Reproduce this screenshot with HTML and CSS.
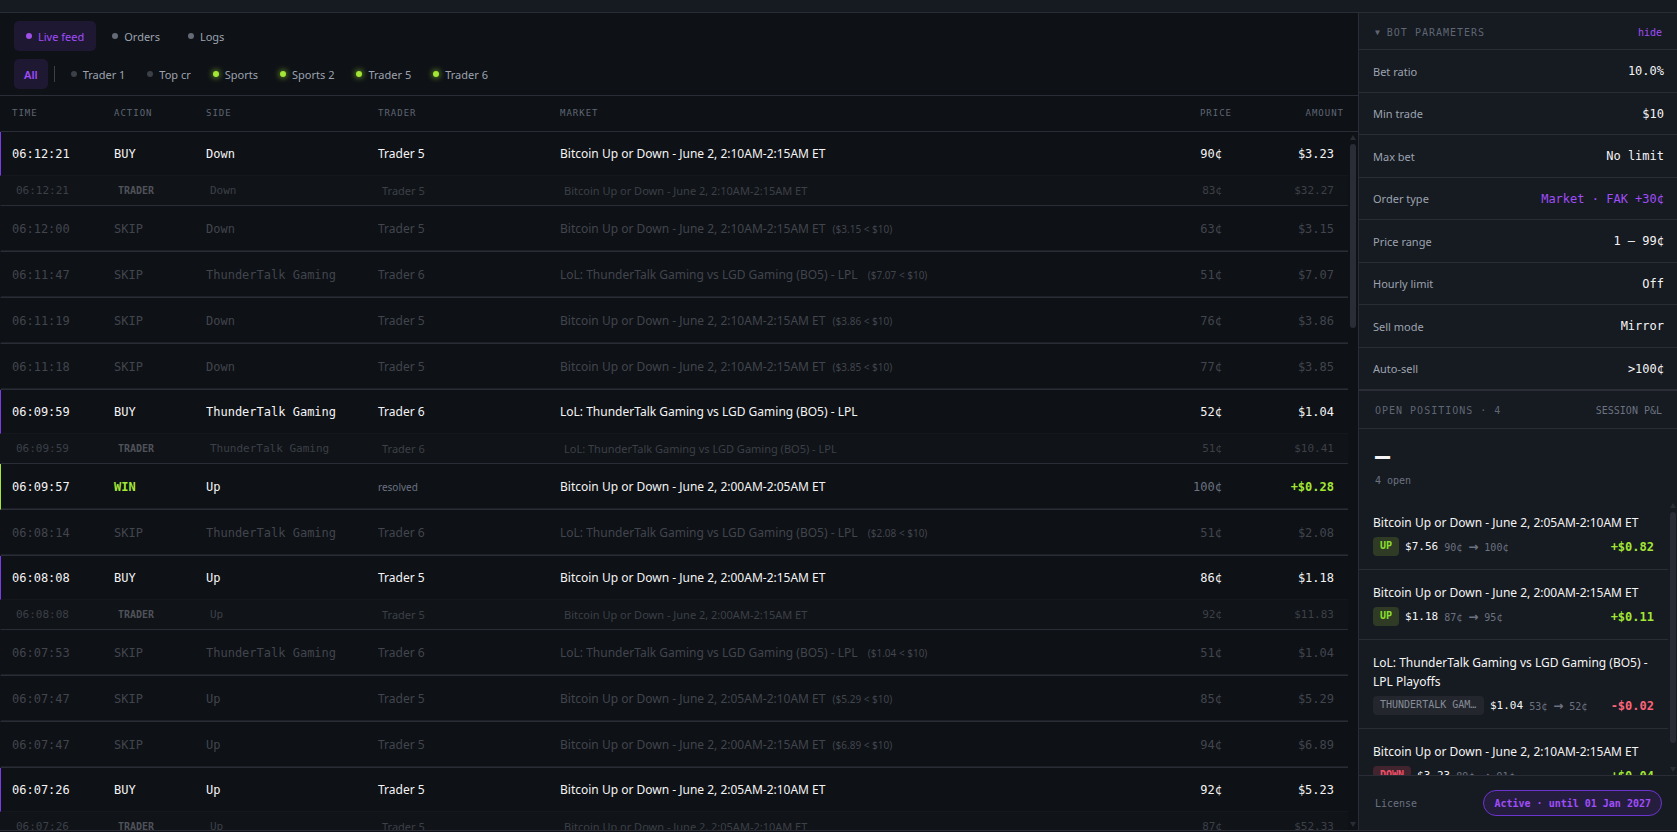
FILE: index.html
```
<!DOCTYPE html>
<html lang="en">
<head>
  <meta charset="UTF-8">
  <title>Copy Bot</title>
  <link rel="stylesheet" href="styles.css">
</head>
<body>

  <div class="topbar"></div>

  <div class="layout">

    <main class="feed">
      <div class="toolbar">
        <nav class="tabs">
          <button class="tab active"><span class="dot"></span>Live feed</button>
          <button class="tab"><span class="dot"></span>Orders</button>
          <button class="tab"><span class="dot"></span>Logs</button>
        </nav>
        <div class="filters">
          <button class="chip active">All</button>
          <span class="sep"></span>
          <button class="chip"><span class="dot"></span>Trader 1</button>
          <button class="chip"><span class="dot"></span>Top cr</button>
          <button class="chip"><span class="dot on"></span>Sports</button>
          <button class="chip"><span class="dot on"></span>Sports 2</button>
          <button class="chip"><span class="dot on"></span>Trader 5</button>
          <button class="chip"><span class="dot on"></span>Trader 6</button>
        </div>
      </div>

      <div class="table-wrap">
        <table class="trades">
          <thead>
            <tr><th>TIME</th><th>ACTION</th><th>SIDE</th><th>TRADER</th><th>MARKET</th><th class="num">PRICE</th><th class="num">AMOUNT</th></tr>
          </thead>
          <tbody>
            <tr class="buy"><td>06:12:21</td><td>BUY</td><td>Down</td><td class="name">Trader 5</td><td class="name">Bitcoin Up or Down - June 2, 2:10AM-2:15AM ET</td><td class="num">90¢</td><td class="num">$3.23</td></tr>
            <tr class="source"><td>06:12:21</td><td class="tag">TRADER</td><td>Down</td><td class="name">Trader 5</td><td class="name">Bitcoin Up or Down - June 2, 2:10AM-2:15AM ET</td><td class="num">83¢</td><td class="num">$32.27</td></tr>
            <tr class="skip"><td>06:12:00</td><td>SKIP</td><td>Down</td><td class="name">Trader 5</td><td class="name">Bitcoin Up or Down - June 2, 2:10AM-2:15AM ET <span class="reason">($3.15 &lt; $10)</span></td><td class="num">63¢</td><td class="num">$3.15</td></tr>
            <tr class="skip"><td>06:11:47</td><td>SKIP</td><td>ThunderTalk Gaming</td><td class="name">Trader 6</td><td class="name">LoL: ThunderTalk Gaming vs LGD Gaming (BO5) - LPL&nbsp; <span class="reason">($7.07 &lt; $10)</span></td><td class="num">51¢</td><td class="num">$7.07</td></tr>
            <tr class="skip"><td>06:11:19</td><td>SKIP</td><td>Down</td><td class="name">Trader 5</td><td class="name">Bitcoin Up or Down - June 2, 2:10AM-2:15AM ET <span class="reason">($3.86 &lt; $10)</span></td><td class="num">76¢</td><td class="num">$3.86</td></tr>
            <tr class="skip"><td>06:11:18</td><td>SKIP</td><td>Down</td><td class="name">Trader 5</td><td class="name">Bitcoin Up or Down - June 2, 2:10AM-2:15AM ET <span class="reason">($3.85 &lt; $10)</span></td><td class="num">77¢</td><td class="num">$3.85</td></tr>
            <tr class="buy"><td>06:09:59</td><td>BUY</td><td>ThunderTalk Gaming</td><td class="name">Trader 6</td><td class="name">LoL: ThunderTalk Gaming vs LGD Gaming (BO5) - LPL</td><td class="num">52¢</td><td class="num">$1.04</td></tr>
            <tr class="source"><td>06:09:59</td><td class="tag">TRADER</td><td>ThunderTalk Gaming</td><td class="name">Trader 6</td><td class="name">LoL: ThunderTalk Gaming vs LGD Gaming (BO5) - LPL</td><td class="num">51¢</td><td class="num">$10.41</td></tr>
            <tr class="win"><td>06:09:57</td><td class="gain">WIN</td><td>Up</td><td class="name resolved">resolved</td><td class="name">Bitcoin Up or Down - June 2, 2:00AM-2:05AM ET</td><td class="num final">100¢</td><td class="num gain">+$0.28</td></tr>
            <tr class="skip"><td>06:08:14</td><td>SKIP</td><td>ThunderTalk Gaming</td><td class="name">Trader 6</td><td class="name">LoL: ThunderTalk Gaming vs LGD Gaming (BO5) - LPL&nbsp; <span class="reason">($2.08 &lt; $10)</span></td><td class="num">51¢</td><td class="num">$2.08</td></tr>
            <tr class="buy"><td>06:08:08</td><td>BUY</td><td>Up</td><td class="name">Trader 5</td><td class="name">Bitcoin Up or Down - June 2, 2:00AM-2:15AM ET</td><td class="num">86¢</td><td class="num">$1.18</td></tr>
            <tr class="source"><td>06:08:08</td><td class="tag">TRADER</td><td>Up</td><td class="name">Trader 5</td><td class="name">Bitcoin Up or Down - June 2, 2:00AM-2:15AM ET</td><td class="num">92¢</td><td class="num">$11.83</td></tr>
            <tr class="skip"><td>06:07:53</td><td>SKIP</td><td>ThunderTalk Gaming</td><td class="name">Trader 6</td><td class="name">LoL: ThunderTalk Gaming vs LGD Gaming (BO5) - LPL&nbsp; <span class="reason">($1.04 &lt; $10)</span></td><td class="num">51¢</td><td class="num">$1.04</td></tr>
            <tr class="skip"><td>06:07:47</td><td>SKIP</td><td>Up</td><td class="name">Trader 5</td><td class="name">Bitcoin Up or Down - June 2, 2:05AM-2:10AM ET <span class="reason">($5.29 &lt; $10)</span></td><td class="num">85¢</td><td class="num">$5.29</td></tr>
            <tr class="skip"><td>06:07:47</td><td>SKIP</td><td>Up</td><td class="name">Trader 5</td><td class="name">Bitcoin Up or Down - June 2, 2:00AM-2:15AM ET <span class="reason">($6.89 &lt; $10)</span></td><td class="num">94¢</td><td class="num">$6.89</td></tr>
            <tr class="buy"><td>06:07:26</td><td>BUY</td><td>Up</td><td class="name">Trader 5</td><td class="name">Bitcoin Up or Down - June 2, 2:05AM-2:10AM ET</td><td class="num">92¢</td><td class="num">$5.23</td></tr>
            <tr class="source"><td>06:07:26</td><td class="tag">TRADER</td><td>Up</td><td class="name">Trader 5</td><td class="name">Bitcoin Up or Down - June 2, 2:05AM-2:10AM ET</td><td class="num">87¢</td><td class="num">$52.33</td></tr>
          </tbody>
        </table>
        <div class="scrollbar feed-bar"><i class="up"></i><i class="thumb"></i><i class="down"></i></div>
      </div>
    </main>

    <aside class="sidebar">
      <div class="side-head">
        <h2><span class="caret">▼</span>BOT PARAMETERS</h2>
        <button class="hide-btn">hide</button>
      </div>
      <dl class="params">
        <div><dt>Bet ratio</dt><dd>10.0%</dd></div>
        <div><dt>Min trade</dt><dd>$10</dd></div>
        <div><dt>Max bet</dt><dd>No limit</dd></div>
        <div><dt>Order type</dt><dd class="accent">Market · FAK +30¢</dd></div>
        <div><dt>Price range</dt><dd>1 – 99¢</dd></div>
        <div><dt>Hourly limit</dt><dd>Off</dd></div>
        <div><dt>Sell mode</dt><dd>Mirror</dd></div>
        <div><dt>Auto-sell</dt><dd>&gt;100¢</dd></div>
      </dl>

      <div class="side-head positions-head">
        <h2>OPEN POSITIONS · 4</h2>
        <span class="session">SESSION P&amp;L</span>
      </div>
      <div class="pnl">
        <div class="pnl-value">—</div>
        <div class="pnl-sub">4 open</div>
      </div>

      <div class="positions-wrap">
        <ul class="positions">
          <li>
            <div class="title">Bitcoin Up or Down - June 2, 2:05AM-2:10AM ET</div>
            <div class="meta"><span class="badge up">UP</span><span class="stake">$7.56</span><span class="move">90¢ <b>→</b> 100¢</span><span class="result pos">+$0.82</span></div>
          </li>
          <li>
            <div class="title">Bitcoin Up or Down - June 2, 2:00AM-2:15AM ET</div>
            <div class="meta"><span class="badge up">UP</span><span class="stake">$1.18</span><span class="move">87¢ <b>→</b> 95¢</span><span class="result pos">+$0.11</span></div>
          </li>
          <li>
            <div class="title">LoL: ThunderTalk Gaming vs LGD Gaming (BO5) - LPL Playoffs</div>
            <div class="meta"><span class="badge">THUNDERTALK GAMING</span><span class="stake">$1.04</span><span class="move">53¢ <b>→</b> 52¢</span><span class="result neg">-$0.02</span></div>
          </li>
          <li>
            <div class="title">Bitcoin Up or Down - June 2, 2:10AM-2:15AM ET</div>
            <div class="meta"><span class="badge down">DOWN</span><span class="stake">$3.23</span><span class="move">89¢ <b>→</b> 91¢</span><span class="result pos">+$0.04</span></div>
          </li>
        </ul>
        <div class="scrollbar pos-bar"><i class="up"></i><i class="thumb"></i><i class="down"></i></div>
      </div>

      <div class="license">
        <span>License</span>
        <button class="license-btn">Active · until 01 Jan 2027</button>
      </div>
    </aside>

  </div>

</body>
</html>
```
FILE: styles.css
```
:root {
  --bg: #0e1116;
  --panel: #161a21;
  --line: #2a2d35;
  --text: #f4f4f5;
  --muted: #9ca3af;
  --dim: #5f6673;
  --faint: #41454d;
  --accent: #a04dfa;
  --green: #a3e635;
  --red: #fb6478;
  --sans: "Noto Sans", "Open Sans", sans-serif;
  --mono: "DejaVu Sans Mono", monospace;
}

* {
  box-sizing: border-box;
}

body {
  margin: 0;
  height: 100vh;
  display: flex;
  flex-direction: column;
  padding-bottom: 1px;
  background: var(--bg);
  color: var(--text);
  font-family: var(--sans);
  font-size: 12px;
}

button {
  font: inherit;
  border: none;
  background: none;
  cursor: pointer;
}

.topbar {
  height: 13px;
  flex: none;
  background: var(--panel);
  border-bottom: 1px solid var(--line);
}

.layout {
  flex: 1;
  min-height: 0;
  display: grid;
  grid-template-columns: minmax(0, 1fr) 319px;
  grid-template-rows: minmax(0, 1fr);
  border-bottom: 1px solid var(--line);
}

/* feed */
.feed {
  display: flex;
  flex-direction: column;
  min-height: 0;
}

.toolbar {
  padding: 8px 14px 6px;
  display: flex;
  flex-direction: column;
  gap: 8px;
  border-bottom: 1px solid var(--line);
}

.tabs, .filters {
  display: flex;
  align-items: center;
  gap: 4px;
}

.filters {
  gap: 2px;
}

.tab, .chip {
  display: flex;
  align-items: center;
  gap: 6px;
  height: 30px;
  padding: 0 12px;
  border-radius: 5px;
  color: var(--muted);
  font-size: 11px;
}

.chip {
  padding: 0 10px;
}

.tab.active, .chip.active {
  background: #1f1833;
  color: var(--accent);
}

.chip.active {
  font-weight: 600;
}

.dot {
  width: 6px;
  height: 6px;
  border-radius: 50%;
  background: #656b76;
}

.chip .dot {
  background: #3b4049;
}

.tab.active .dot {
  background: #a050e8;
}

.chip .dot.on {
  background: var(--green);
  box-shadow: 0 0 6px var(--green);
}

.sep {
  width: 1px;
  height: 16px;
  margin: 0 4px;
  background: #3b3f48;
}

.table-wrap {
  position: relative;
  flex: 1;
  min-height: 0;
}

.trades {
  height: 100%;
  display: flex;
  flex-direction: column;
  font-family: var(--mono);
}

.trades tbody {
  display: block;
  flex: 1;
  min-height: 0;
  margin-right: 10px;
  overflow-y: auto;
  scrollbar-width: none;
}

.trades tr {
  display: grid;
  grid-template-columns: 102px 92px 172px 182px minmax(0, 1fr) 80px 112px;
  align-items: center;
  height: 46px;
  padding: 0 14px 0 11px;
  border-left: 1px solid transparent;
  border-bottom: 1px solid var(--line);
}

.trades thead {
  display: block;
}

.trades thead tr {
  height: 36px;
  padding-bottom: 1px;
}

.trades th, .trades td {
  padding: 0;
  text-align: left;
  font-weight: normal;
  white-space: nowrap;
}

.trades th {
  font-size: 9px;
  letter-spacing: 1px;
  color: var(--dim);
}

.trades .num {
  text-align: right;
}

.trades .name {
  font-family: var(--sans);
}

.trades .buy {
  height: 44px;
  border-left-color: #7c3aed;
  border-bottom-color: #14171c;
}

.trades .win {
  border-left-color: var(--green);
}

.trades .skip, .trades .win {
  box-shadow: inset 0 -1px #1d2026;
}

.trades .skip {
  color: var(--faint);
}

.trades .source {
  height: 30px;
  background: #101318;
  color: #3c4047;
  font-size: 11px;
}

.trades .source td:not(.num) {
  padding-left: 4px;
}

.trades .source .tag {
  font-size: 10px;
  font-weight: bold;
  color: #4f5258;
}

.reason {
  margin-left: 4px;
  font-size: 10px;
}

.trades .resolved {
  font-size: 10px;
  color: #6b7280;
}

.trades .final {
  color: #6b7280;
}

.trades .gain {
  color: var(--green);
  font-weight: bold;
}

/* scrollbars */
.scrollbar {
  position: absolute;
  right: 0;
  bottom: 0;
  width: 10px;
  padding: 3px 2px;
  display: flex;
  flex-direction: column;
}

.feed-bar {
  top: 36px;
}

.pos-bar {
  top: 0;
  width: 9px;
  padding-right: 1px;
}

.scrollbar .up, .scrollbar .down {
  border: 3px solid transparent;
  border-top-width: 0;
  border-bottom: 5px solid var(--line);
}

.scrollbar .down {
  margin-top: auto;
  border-bottom-width: 0;
  border-top: 5px solid var(--line);
}

.scrollbar .thumb {
  margin-top: 4px;
  height: 184px;
  border-radius: 3px;
  background: var(--line);
}

.pos-bar .thumb {
  height: 231px;
}

/* sidebar */
.sidebar {
  display: flex;
  flex-direction: column;
  min-height: 0;
  background: var(--panel);
  border-left: 1px solid var(--line);
}

.side-head {
  display: flex;
  align-items: center;
  justify-content: space-between;
  flex: none;
  height: 37px;
  padding: 2px 15px 0 16px;
  border-bottom: 1px solid var(--line);
  font-family: var(--mono);
  font-size: 10px;
  color: var(--dim);
}

.side-head h2 {
  display: flex;
  align-items: center;
  gap: 6px;
  margin: 0;
  font-size: 10px;
  font-weight: normal;
  letter-spacing: 1px;
}

.caret {
  font-size: 8px;
}

.hide-btn {
  padding: 0;
  color: var(--accent);
}

.positions-head {
  height: 39px;
  border-top: 1px solid var(--line);
}

.session {
  color: #6b7280;
}

.params {
  margin: 0;
}

.params div {
  display: flex;
  align-items: center;
  justify-content: space-between;
  height: 42px;
  padding: 0 13px 0 14px;
  border-bottom: 1px solid var(--line);
}

.params div:nth-child(odd) {
  height: 43px;
}

.params dt {
  color: var(--muted);
  font-size: 11px;
}

.params dd {
  margin: 0;
  font-family: var(--mono);
}

.params .accent {
  color: var(--accent);
}

.pnl {
  flex: none;
  height: 71px;
  padding: 14px 16px 0;
  font-family: var(--mono);
}

.pnl-value {
  height: 31px;
  font-size: 25px;
  line-height: 26px;
  font-weight: bold;
}

.pnl-sub {
  font-size: 10px;
  line-height: 14px;
  color: #6b7280;
}

.positions-wrap {
  position: relative;
  flex: 1;
  min-height: 0;
}

.positions {
  height: 100%;
  margin: 0 9px 0 0;
  padding: 0;
  list-style: none;
  overflow-y: auto;
  scrollbar-width: none;
}

.positions li {
  padding: 13px 14px;
  border-bottom: 1px solid var(--line);
}

.title {
  line-height: 19px;
  margin-bottom: 5px;
}

.meta {
  display: flex;
  align-items: center;
  gap: 6px;
  height: 19px;
  font-family: var(--mono);
  font-size: 11px;
  white-space: nowrap;
}

.badge {
  max-width: 111px;
  height: 19px;
  padding: 0 7px;
  border-radius: 4px;
  overflow: hidden;
  text-overflow: ellipsis;
  background: #23262d;
  color: #868c98;
  font-size: 10px;
  line-height: 18px;
}

.badge.up {
  background: #2f3b25;
  color: #8be02c;
  font-weight: bold;
}

.badge.down {
  background: #42242e;
  color: #f0506a;
  font-weight: bold;
}

.move {
  color: #6b7280;
  font-size: 10px;
}

.move b {
  font-family: "DejaVu Sans", sans-serif;
  font-size: 12px;
  line-height: 12px;
}

.result {
  margin-left: auto;
  font-size: 12px;
  font-weight: bold;
}

.pos {
  color: var(--green);
}

.neg {
  color: var(--red);
}

.license {
  display: flex;
  align-items: center;
  justify-content: space-between;
  flex: none;
  height: 55px;
  padding: 0 15px 0 16px;
  border-top: 1px solid var(--line);
  font-family: var(--mono);
  font-size: 10px;
  color: #6b7280;
}

.license-btn {
  height: 26px;
  padding: 0 10px;
  border: 1px solid #6d35cf;
  border-radius: 13px;
  background: #251d3d;
  color: var(--accent);
  font-weight: bold;
}
```
